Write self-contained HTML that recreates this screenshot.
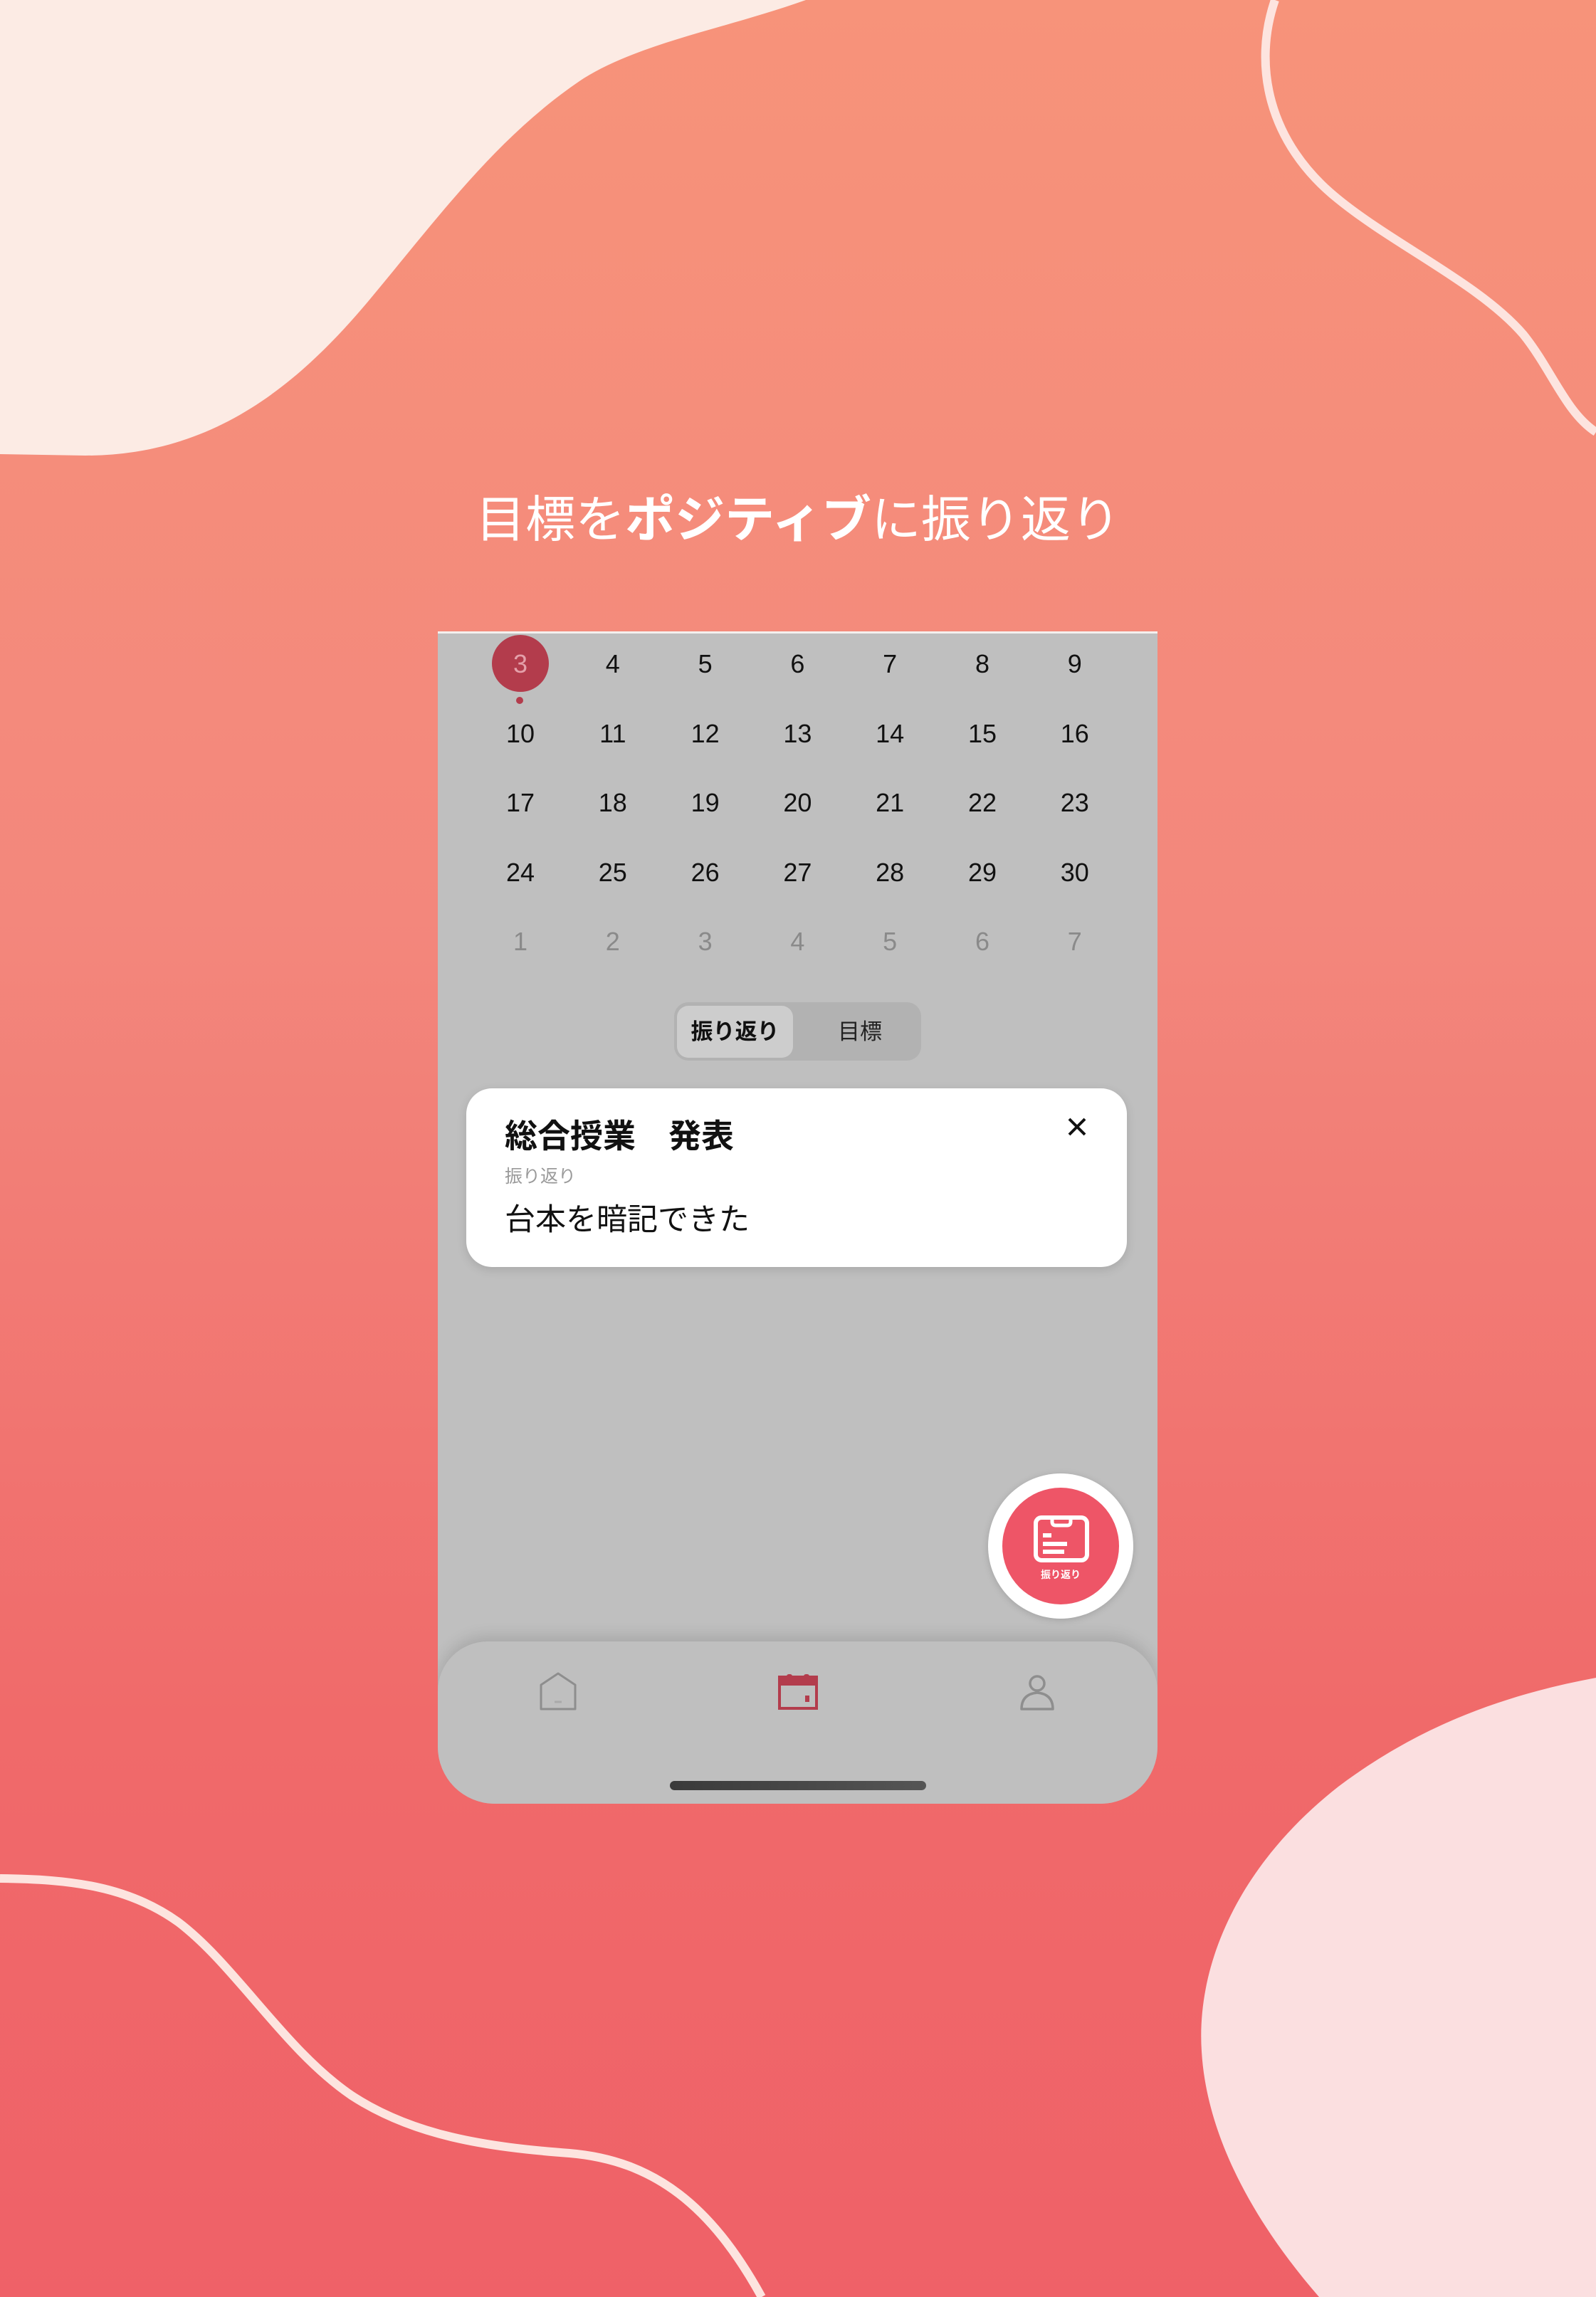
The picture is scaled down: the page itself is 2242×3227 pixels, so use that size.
<!DOCTYPE html>
<html><head><meta charset="utf-8">
<style>
*{margin:0;padding:0;box-sizing:border-box}
html,body{width:2242px;height:3227px;overflow:hidden}
body{position:relative;background:linear-gradient(180deg,#f7937a 0%,#f3877c 40%,#f06a6a 75%,#ef6168 100%);font-family:"Liberation Sans","Noto Sans CJK JP",sans-serif}
.abs{position:absolute}
.title{position:absolute;left:0;width:2242px;top:688px;text-align:center;color:#fff;font-size:70px;letter-spacing:0px;line-height:84px}
.title b{font-weight:700}
.phone{position:absolute;left:615px;top:887px;width:1011px;height:1647px;background:#bfbfbf;border-radius:0 0 80px 80px;overflow:hidden;border-top:3px solid #f4f0ee}
.d{position:absolute;width:80px;text-align:center;font-size:36px;line-height:40px;color:#111;transform:translateX(-40px)}
.g{color:#8a8a8a}
</style></head><body>
<svg class="abs" style="left:0;top:0" width="2242" height="3227" viewBox="0 0 2242 3227">
<path d="M0 0 H1132 C1020 40 900 60 820 110 C700 190 620 300 520 420 C420 540 300 640 120 640 L0 638 Z" fill="#fcebe4"/>
<path d="M1791 0 C1760 90 1780 200 1880 280 C1960 345 2080 400 2140 470 C2180 520 2200 580 2242 607" fill="none" stroke="#fde4df" stroke-width="12"/>
<path d="M2242 2357 C2120 2380 2000 2420 1880 2510 C1740 2620 1680 2760 1688 2882 C1695 3000 1760 3120 1853 3227 H2242 Z" fill="#fbdfe0"/>
<path d="M0 2639 C100 2640 180 2650 250 2700 C330 2760 400 2880 494 2944 C580 3000 680 3016 800 3025 C920 3035 1000 3100 1070 3227" fill="none" stroke="#fde4df" stroke-width="12"/>
</svg>
<div class="title">目標を<b>ポジティブ</b>に振り返り</div>
<div class="phone">
<div class="abs" style="left:76px;top:2px;width:80px;height:80px;border-radius:50%;background:#b33c4c"></div>
<div class="abs" style="left:110px;top:89px;width:10px;height:10px;border-radius:50%;background:#b33c4c"></div>
<div id="cal"></div>
<div class="abs" style="left:332px;top:518px;width:347px;height:82px;border-radius:20px;background:#b2b2b2"></div>
<div class="abs" style="left:336px;top:523px;width:163px;height:73px;border-radius:16px;background:#cdcdcd;font-weight:700;font-size:31px;line-height:73px;text-align:center;color:#111">振り返り</div>
<div class="abs" style="left:505px;top:523px;width:176px;height:73px;font-size:31px;line-height:73px;text-align:center;color:#222">目標</div>
<div class="abs" style="left:40px;top:639px;width:928px;height:251px;border-radius:36px;background:#fff;box-shadow:0 4px 14px rgba(0,0,0,.12)">
<div class="abs" style="left:54px;top:38px;font-size:46px;font-weight:700;color:#111;line-height:58px;white-space:pre">総合授業　発表</div>
<div class="abs" style="left:54px;top:108px;font-size:25px;color:#9a9a9a;line-height:32px">振り返り</div>
<div class="abs" style="left:54px;top:158px;font-size:43px;color:#111;line-height:54px">台本を暗記できた</div>
<svg class="abs" style="left:844px;top:40px" width="28" height="28" viewBox="0 0 28 28"><path d="M3 3L25 25M25 3L3 25" stroke="#111" stroke-width="4"/></svg>
</div>
<div class="abs" style="left:773px;top:1180px;width:204px;height:204px;border-radius:50%;background:#fff;box-shadow:0 2px 10px rgba(0,0,0,.15)"></div>
<div class="abs" style="left:793px;top:1200px;width:164px;height:164px;border-radius:50%;background:#ee5567"></div>
<svg class="abs" style="left:836px;top:1238px" width="80" height="70" viewBox="0 0 80 70">
<rect x="4" y="4" width="72" height="60" rx="8" fill="none" stroke="#fff" stroke-width="6"/>
<path d="M27 4 V10 Q27 15 32 15 H48 Q53 15 53 10 V4" fill="none" stroke="#fff" stroke-width="5"/>
<path d="M14 29H26M14 41H48M14 52H44" stroke="#fff" stroke-width="6"/>
</svg>
<div class="abs" style="left:793px;top:1312px;width:164px;text-align:center;color:#fff;font-size:14px;font-weight:700">振り返り</div>
<div class="abs" style="left:0;top:1416px;width:1011px;height:240px;border-radius:70px 70px 80px 80px;background:#bfbfbf;box-shadow:0 -8px 20px rgba(0,0,0,.12)"></div>
<svg class="abs" style="left:140px;top:1458px" width="60" height="56" viewBox="0 0 60 56"><path d="M5 53 V19 L29 3 L53 19 V53 Z" fill="none" stroke="#8e8e8e" stroke-width="3" stroke-linejoin="round"/><path d="M24 43H34" stroke="#aaa" stroke-width="3"/></svg>
<svg class="abs" style="left:478px;top:1462px" width="56" height="50" viewBox="0 0 56 50"><rect x="2" y="4" width="52" height="44" fill="none" stroke="#b33c4c" stroke-width="4"/><rect x="2" y="4" width="52" height="12" fill="#b33c4c"/><rect x="12" y="0" width="8" height="8" rx="3" fill="#b33c4c"/><rect x="36" y="0" width="8" height="8" rx="3" fill="#b33c4c"/><rect x="38" y="30" width="6" height="9" fill="#b33c4c"/></svg>
<svg class="abs" style="left:816px;top:1462px" width="52" height="52" viewBox="0 0 52 52"><circle cx="26" cy="13" r="10" fill="none" stroke="#8e8e8e" stroke-width="3.5"/><path d="M4 49 Q4 28 26 26 Q48 28 48 49 Z" fill="none" stroke="#8e8e8e" stroke-width="3.5" stroke-linejoin="round"/></svg>
<div class="abs" style="left:326px;top:1612px;width:360px;height:13px;border-radius:7px;background:linear-gradient(90deg,#3a3a3a,#555)"></div>
</div>
<script>
var rows=[["3","4","5","6","7","8","9"],["10","11","12","13","14","15","16"],["17","18","19","20","21","22","23"],["24","25","26","27","28","29","30"],["1","2","3","4","5","6","7"]];
var h="";
for(var r=0;r<5;r++)for(var c=0;c<7;c++){var x=116+c*129.8,y=23+r*97.5;var cl=r==4?"d g":"d";var st=(r==0&&c==0)?"color:#e4a0aa;":"";h+='<div class="'+cl+'" style="'+st+'left:'+x+'px;top:'+y+'px">'+rows[r][c]+'</div>';}
document.getElementById("cal").innerHTML=h;
</script>
</body></html>
